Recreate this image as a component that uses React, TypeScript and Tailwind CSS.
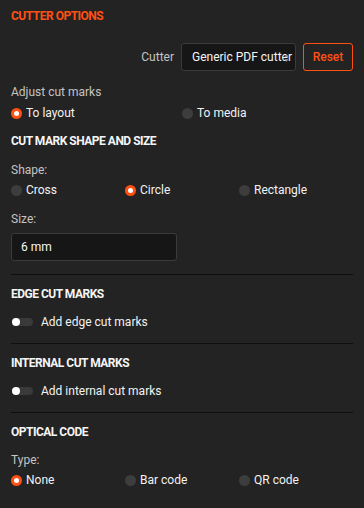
import React from "react";

function Radio({ checked, label }: { checked?: boolean; label: string }) {
  return (
    <div className="flex items-center h-[16px]">
      {checked ? (
        <span className="w-[11px] h-[11px] rounded-full bg-[#ff5014] flex items-center justify-center">
          <span className="w-[5px] h-[5px] rounded-full bg-white" />
        </span>
      ) : (
        <span className="w-[11px] h-[11px] rounded-full bg-[#3d3d3d]" />
      )}
      <span className="ml-[4px] text-[12px] leading-[16px] text-[#f2f2f2]">{label}</span>
    </div>
  );
}

function Toggle({ label }: { label: string }) {
  return (
    <div className="flex items-center h-[16px] mt-[12px]">
      <span className="ml-[1px] w-[21px] h-[8px] rounded-full bg-[#3a3a3a] relative flex items-center">
        <span className="w-[8px] h-[8px] rounded-full bg-white" />
      </span>
      <span className="ml-[8px] text-[12px] leading-[16px] text-[#f2f2f2]">{label}</span>
    </div>
  );
}

function Heading({ children, mt }: { children: React.ReactNode; mt: string }) {
  return (
    <div className={`${mt} h-[16px] leading-[16px] text-[12px] font-bold text-[#f5f5f5] tracking-[-0.5px]`}>
      {children}
    </div>
  );
}

export default function App() {
  return (
    <div
      className="w-[364px] h-[508px] bg-[#232323] px-[11px] pt-[8px] flex flex-col"
      style={{ fontFamily: "Roboto, 'Noto Sans', sans-serif" }}
    >
      <div className="h-[16px] leading-[16px] text-[12px] font-bold text-[#ff5014] tracking-[-0.5px]">
        CUTTER OPTIONS
      </div>

      <div className="mt-[19px] flex items-center justify-end h-[28px]">
        <span className="text-[12px] text-[#c4c4c4] mr-[7px]">Cutter</span>
        <div className="relative w-[115px] h-[28px] bg-[#161616] border border-[#3b3b3b] rounded-[3px] overflow-hidden flex items-center">
          <span className="pl-[10px] text-[12px] text-[#f5f5f5] whitespace-nowrap">Generic PDF cutter</span>
          <svg className="absolute right-[6px] top-[9px]" width="5" height="10" viewBox="0 0 5 10">
            <path d="M2.5 1 L4.5 4 L0.5 4 Z" fill="#8a8a8a" />
            <path d="M2.5 9 L4.5 6 L0.5 6 Z" fill="#8a8a8a" />
          </svg>
        </div>
        <button className="ml-[7px] w-[50px] h-[28px] border border-[#ff5014] rounded-[3px] text-[12px] font-medium text-[#ff5014] flex items-center justify-center">
          Reset
        </button>
      </div>

      <div className="mt-[13px] h-[16px] leading-[16px] text-[12px] text-[#c4c4c4]">Adjust cut marks</div>
      <div className="mt-[5px] grid grid-cols-2">
        <Radio checked label="To layout" />
        <Radio label="To media" />
      </div>

      <Heading mt="mt-[12px]">CUT MARK SHAPE AND SIZE</Heading>
      <div className="mt-[13px] h-[16px] leading-[16px] text-[12px] text-[#c4c4c4]">Shape:</div>
      <div className="mt-[4px] grid grid-cols-3">
        <Radio label="Cross" />
        <Radio checked label="Circle" />
        <Radio label="Rectangle" />
      </div>
      <div className="mt-[13px] h-[16px] leading-[16px] text-[12px] text-[#c4c4c4]">Size:</div>
      <div className="mt-[6px] w-[166px] h-[28px] bg-[#161616] border border-[#3b3b3b] rounded-[3px] flex items-center pl-[9px] text-[12px] text-[#f5f5f5]">
        6 mm
      </div>

      <div className="mt-[13px] h-[1px] bg-[#0f0f0f]" />
      <Heading mt="mt-[11px]">EDGE CUT MARKS</Heading>
      <Toggle label="Add edge cut marks" />

      <div className="mt-[13px] h-[1px] bg-[#0f0f0f]" />
      <Heading mt="mt-[11px]">INTERNAL CUT MARKS</Heading>
      <Toggle label="Add internal cut marks" />

      <div className="mt-[13px] h-[1px] bg-[#0f0f0f]" />
      <Heading mt="mt-[11px]">OPTICAL CODE</Heading>
      <div className="mt-[12px] h-[16px] leading-[16px] text-[12px] text-[#c4c4c4]">Type:</div>
      <div className="mt-[4px] grid grid-cols-3">
        <Radio checked label="None" />
        <Radio label="Bar code" />
        <Radio label="QR code" />
      </div>
    </div>
  );
}
